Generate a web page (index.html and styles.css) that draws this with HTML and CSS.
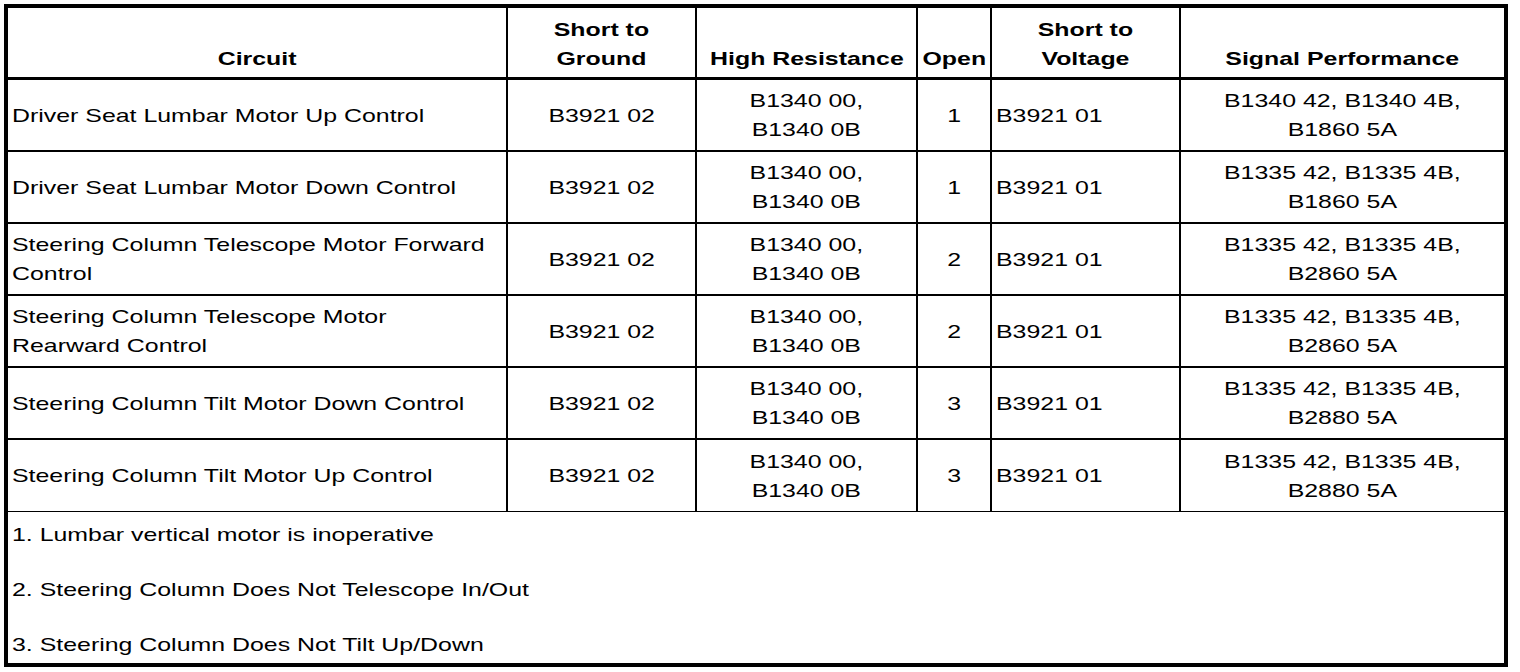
FILE: index.html
```html
<!DOCTYPE html>
<html>
<head>
<meta charset="utf-8">
<link rel="stylesheet" href="styles.css">
</head>
<body>
<table class="dtc">
  <thead>
    <tr>
      <th class="c1"><span class="t">Circuit</span></th>
      <th class="c2"><span class="t">Short to<br>Ground</span></th>
      <th class="c3"><span class="t">High Resistance</span></th>
      <th class="c4"><span class="t">Open</span></th>
      <th class="c5"><span class="t">Short to<br>Voltage</span></th>
      <th class="c6"><span class="t">Signal Performance</span></th>
    </tr>
  </thead>
  <tbody>
    <tr>
      <td class="left"><span class="t">Driver Seat Lumbar Motor Up Control</span></td>
      <td><span class="t">B3921 02</span></td>
      <td><span class="t">B1340 00,<br>B1340 0B</span></td>
      <td><span class="t">1</span></td>
      <td class="left"><span class="t">B3921 01</span></td>
      <td class="last"><span class="t">B1340 42, B1340 4B,<br>B1860 5A</span></td>
    </tr>
    <tr>
      <td class="left"><span class="t">Driver Seat Lumbar Motor Down Control</span></td>
      <td><span class="t">B3921 02</span></td>
      <td><span class="t">B1340 00,<br>B1340 0B</span></td>
      <td><span class="t">1</span></td>
      <td class="left"><span class="t">B3921 01</span></td>
      <td class="last"><span class="t">B1335 42, B1335 4B,<br>B1860 5A</span></td>
    </tr>
    <tr>
      <td class="left"><span class="t">Steering Column Telescope Motor Forward<br>Control</span></td>
      <td><span class="t">B3921 02</span></td>
      <td><span class="t">B1340 00,<br>B1340 0B</span></td>
      <td><span class="t">2</span></td>
      <td class="left"><span class="t">B3921 01</span></td>
      <td class="last"><span class="t">B1335 42, B1335 4B,<br>B2860 5A</span></td>
    </tr>
    <tr>
      <td class="left"><span class="t">Steering Column Telescope Motor<br>Rearward Control</span></td>
      <td><span class="t">B3921 02</span></td>
      <td><span class="t">B1340 00,<br>B1340 0B</span></td>
      <td><span class="t">2</span></td>
      <td class="left"><span class="t">B3921 01</span></td>
      <td class="last"><span class="t">B1335 42, B1335 4B,<br>B2860 5A</span></td>
    </tr>
    <tr>
      <td class="left"><span class="t">Steering Column Tilt Motor Down Control</span></td>
      <td><span class="t">B3921 02</span></td>
      <td><span class="t">B1340 00,<br>B1340 0B</span></td>
      <td><span class="t">3</span></td>
      <td class="left"><span class="t">B3921 01</span></td>
      <td class="last"><span class="t">B1335 42, B1335 4B,<br>B2880 5A</span></td>
    </tr>
    <tr>
      <td class="left"><span class="t">Steering Column Tilt Motor Up Control</span></td>
      <td><span class="t">B3921 02</span></td>
      <td><span class="t">B1340 00,<br>B1340 0B</span></td>
      <td><span class="t">3</span></td>
      <td class="left"><span class="t">B3921 01</span></td>
      <td class="last"><span class="t">B1335 42, B1335 4B,<br>B2880 5A</span></td>
    </tr>
  </tbody>
  <tfoot>
    <tr>
      <td class="notes" colspan="6">
        <p class="note"><span class="t">1. Lumbar vertical motor is inoperative</span></p>
        <p class="note"><span class="t">2. Steering Column Does Not Telescope In/Out</span></p>
        <p class="note"><span class="t">3. Steering Column Does Not Tilt Up/Down</span></p>
      </td>
    </tr>
  </tfoot>
</table>
</body>
</html>
```

FILE: styles.css
```css
html, body {
  margin: 0;
  padding: 0;
  background: #fff;
}

body {
  padding: 4px 0 0 4px;
  font-family: "Liberation Sans", Arial, sans-serif;
  font-size: 19px;
  color: #000;
}

.dtc {
  border-collapse: separate;
  border-spacing: 0;
  table-layout: fixed;
  width: 1504px;
  height: 663px;
  border: 4px solid #000;
  box-sizing: border-box;
}

.dtc th,
.dtc td {
  box-sizing: border-box;
  padding: 0 4px;
  line-height: 29px;
  border-right: 2px solid #000;
  border-bottom: 2px solid #000;
  text-align: center;
  vertical-align: middle;
  font-weight: normal;
  white-space: nowrap;
}

/* the source type is a horizontally expanded grotesque */
.t {
  display: inline-block;
  vertical-align: top;
  transform: scaleX(1.31);
}

.dtc td.left .t,
.note .t {
  transform-origin: left center;
}

.dtc th {
  font-weight: bold;
  vertical-align: bottom;
  height: 72px;
  padding-bottom: 4px;
  border-bottom-width: 3px;
}

.dtc td {
  height: 72px;
}

.dtc .c1 { width: 500px; }
.dtc .c2 { width: 189px; }
.dtc .c3 { width: 221px; }
.dtc .c4 { width: 74px; }
.dtc .c5 { width: 189px; }
.dtc .c6 { width: 323px; }

.dtc .c6,
.dtc .last {
  border-right: 0;
}

.dtc td.left {
  text-align: left;
}

.dtc tbody tr:last-child td {
  border-bottom-width: 1px;
}

.dtc td.notes {
  border: 0;
  height: auto;
  text-align: left;
  vertical-align: top;
  padding: 8px 4px 4px;
}

.note {
  margin: 0 0 26px;
  line-height: 29px;
}

.note:last-child {
  margin-bottom: 0;
}
```
